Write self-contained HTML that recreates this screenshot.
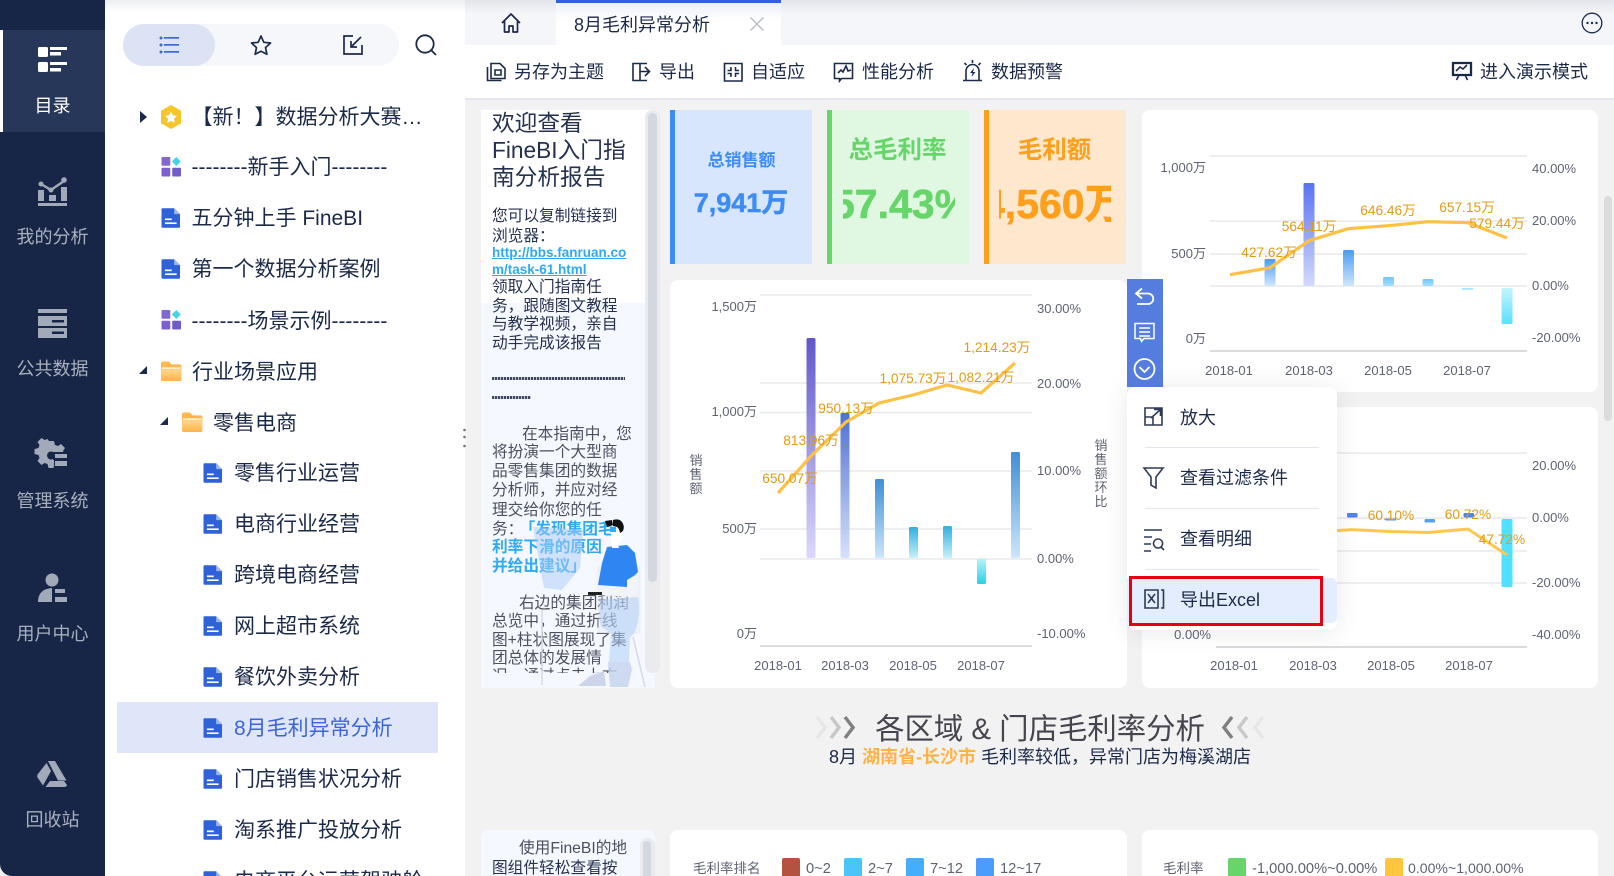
<!DOCTYPE html>
<html lang="zh"><head><meta charset="utf-8"><title>8月毛利异常分析</title>
<style>
html{margin:0;padding:0;background:#f2f2f2;width:1614px;height:876px;overflow:hidden}
body{margin:0;padding:0;background:#f2f2f2;position:relative;width:1614px;height:876px;overflow:hidden;font-family:"Liberation Sans","Noto Sans CJK SC",sans-serif;color:#1c2a4a}
.a{position:absolute;white-space:nowrap}
.t{position:absolute;white-space:nowrap;font-size:21px;height:30px;line-height:30px;color:#1c2a4a;margin-top:1.5px}
.s{position:absolute;left:0;width:105px;text-align:center;font-size:18px;height:26px;line-height:26px;color:#a9b0bd;margin-top:.5px}
.b{position:absolute;white-space:nowrap;font-size:18px;height:26px;line-height:26px;color:#1c2a4a;margin-top:1px}
.l{position:absolute;white-space:nowrap;left:492px;font-size:15.7px;height:20px;line-height:20px;color:#25314f;margin-top:2px}
.g{color:#4b505f}
.m{position:absolute;left:1180px;white-space:nowrap;font-size:18px;height:26px;line-height:26px;color:#1c2a4a;margin-top:1px}
svg{position:absolute;overflow:visible}
svg text{font-family:"Liberation Sans","Noto Sans CJK SC",sans-serif}
.ax{font-size:13px;fill:#5e6373}
.lb{font-size:13.7px;fill:#e09d12}
</style></head><body>

<svg width="0" height="0" style="left:0;top:0">
<defs>
<linearGradient id="fo" x1="0" y1="0" x2="0" y2="1"><stop offset="0" stop-color="#ffd88e"/><stop offset="1" stop-color="#fdb24a"/></linearGradient>
<symbol id="doc" viewBox="0 0 20 20"><path d="M1 0h12l6 6v13a1 1 0 0 1-1 1H1a1 1 0 0 1-1-1V1a1 1 0 0 1 1-1z" fill="#2f62d9"/><path d="M13 0l6 6h-6z" fill="#9db6ef"/><rect x="3.5" y="10.5" width="7" height="1.7" fill="#fff"/><rect x="3.5" y="14.5" width="12" height="1.7" fill="#fff"/></symbol>
<symbol id="grid" viewBox="0 0 20 20"><rect x="0" y="0" width="9" height="9" rx="1" fill="#8168cf"/><rect x="0" y="11" width="9" height="9" rx="1" fill="#7d5fd0"/><rect x="11" y="11" width="9" height="9" rx="1" fill="#6f5ccb"/><path d="M15.2 0l4.6 4.6-4.6 4.6-4.6-4.6z" fill="#48d2e6"/></symbol>
<symbol id="folder" viewBox="0 0 21 20"><path d="M0 2a2 2 0 0 1 2-2h6l3 3h8a2 2 0 0 1 2 2v13a2 2 0 0 1-2 2H2a2 2 0 0 1-2-2z" fill="#ffb84d"/><rect x="1" y="6" width="19" height="1.6" fill="#fff3dc"/><path d="M0 8h21v10a2 2 0 0 1-2 2H2a2 2 0 0 1-2-2z" fill="url(#fo)"/></symbol>
<linearGradient id="g1" x1="0" y1="0" x2="0" y2="1"><stop offset="0" stop-color="#6157c9"/><stop offset="1" stop-color="#dcd8fc"/></linearGradient>
<linearGradient id="g2" x1="0" y1="0" x2="0" y2="1"><stop offset="0" stop-color="#4e71cf"/><stop offset="1" stop-color="#d6e1fb"/></linearGradient>
<linearGradient id="g3" x1="0" y1="0" x2="0" y2="1"><stop offset="0" stop-color="#3f8fd6"/><stop offset="1" stop-color="#cde6fc"/></linearGradient>
<linearGradient id="g4" x1="0" y1="0" x2="0" y2="1"><stop offset="0" stop-color="#2fb0de"/><stop offset="1" stop-color="#c6f0fb"/></linearGradient>
<linearGradient id="g5" x1="0" y1="0" x2="0" y2="1"><stop offset="0" stop-color="#b4f4f9"/><stop offset="1" stop-color="#2ad0e4"/></linearGradient>
<linearGradient id="h1" x1="0" y1="0" x2="0" y2="1"><stop offset="0" stop-color="#5a72f2"/><stop offset="1" stop-color="#d2d9fb"/></linearGradient>
<linearGradient id="h2" x1="0" y1="0" x2="0" y2="1"><stop offset="0" stop-color="#4a9cf5"/><stop offset="1" stop-color="#cfe6fd"/></linearGradient>
<linearGradient id="h3" x1="0" y1="0" x2="0" y2="1"><stop offset="0" stop-color="#6fc8fb"/><stop offset="1" stop-color="#a5e0fd"/></linearGradient>
<linearGradient id="h4" x1="0" y1="0" x2="0" y2="1"><stop offset="0" stop-color="#c2f5fd"/><stop offset="1" stop-color="#5ce0fd"/></linearGradient>
</defs>
</svg>

<!-- content background chrome -->
<div class="a" style="left:465px;top:0;width:1149px;height:45px;background:#f5f6fa"></div>
<div class="a" style="left:465px;top:45px;width:1149px;height:53px;background:#fff;border-bottom:2px solid #e6e8ef;box-sizing:content-box"></div>
<div class="a" style="left:556px;top:0;width:225px;height:45px;background:linear-gradient(#e9edf8,#fff 45%)"></div>
<div class="a" style="left:556px;top:0;width:225px;height:3px;background:#2f62d9"></div>

<svg style="left:0;top:0" width="1614" height="876" viewBox="0 0 1614 876">
<!-- left text panel -->
<rect x="481" y="110" width="174" height="193" fill="#fff"/>
<rect x="481" y="303" width="174" height="385" fill="#f5f9ff"/>
<rect x="645" y="110" width="15" height="563" rx="7" fill="#e9ebef"/>
<rect x="648" y="113" width="9" height="469" rx="4.5" fill="#d3d7e0"/>
<!-- KPI cards -->
<rect x="670" y="110" width="142" height="154" fill="#d7e6fd"/><rect x="670" y="110" width="5" height="154" fill="#3d8cf5"/>
<rect x="827" y="110" width="142" height="154" fill="#e0f7e2"/><rect x="827" y="110" width="5" height="154" fill="#66d66a"/>
<rect x="984" y="110" width="142" height="154" fill="#fde8cd"/><rect x="984" y="110" width="5" height="154" fill="#ff9f1c"/>
<!-- card A -->
<rect x="1142" y="110" width="456" height="282" rx="8" fill="#fff"/>
<g stroke="#e8e9ec" stroke-width="1.4"><path d="M1210 156H1527M1210 221H1527M1210 254H1527M1210 286H1527"/></g>
<path d="M1210 351H1527" stroke="#cfd0d4" stroke-width="1.4"/>
<g>
<rect x="1264.5" y="259" width="11" height="27" rx="1.5" fill="url(#h2)"/>
<rect x="1303.5" y="183" width="11" height="103" rx="1.5" fill="url(#h1)"/>
<rect x="1343" y="250" width="11" height="36" rx="1.5" fill="url(#h2)"/>
<rect x="1383" y="277" width="11" height="9" rx="1.5" fill="url(#h3)"/>
<rect x="1422.5" y="279" width="11" height="7" rx="1.5" fill="url(#h3)"/>
<rect x="1462" y="288" width="11" height="1.8" fill="#a5e6fd"/>
<rect x="1501.5" y="288" width="11" height="36" rx="1.5" fill="url(#h4)"/>
</g>
<polyline points="1230,274.7 1270,267.7 1309,240.7 1348,228.7 1388,225.7 1428,221.7 1468,222.7 1507,238" fill="none" stroke="#ffc145" stroke-width="3.2"/>
<g class="ax" text-anchor="end"><text x="1206" y="172">1,000万</text><text x="1206" y="258">500万</text><text x="1206" y="343">0万</text></g>
<g class="ax"><text x="1532" y="173">40.00%</text><text x="1532" y="225">20.00%</text><text x="1532" y="290">0.00%</text><text x="1532" y="342">-20.00%</text></g>
<g class="ax" text-anchor="middle"><text x="1229" y="375">2018-01</text><text x="1309" y="375">2018-03</text><text x="1388" y="375">2018-05</text><text x="1467" y="375">2018-07</text></g>
<g class="lb" text-anchor="middle"><text x="1269" y="257">427.62万</text><text x="1309" y="231">564.11万</text><text x="1388" y="215">646.46万</text><text x="1467" y="212">657.15万</text><text x="1497" y="228">579.44万</text></g>
<!-- card B -->
<rect x="670" y="280" width="457" height="408" rx="8" fill="#fff"/>
<g stroke="#e8e9ec" stroke-width="1.4"><path d="M760 295H1032M760 383H1032M760 412.5H1032M760 471H1032M760 529H1032M760 559H1032"/></g>
<path d="M760 646H1032" stroke="#cfd0d4" stroke-width="1.4"/>
<g>
<rect x="806.5" y="338" width="9" height="220" rx="1.5" fill="url(#g1)"/>
<rect x="840.5" y="413" width="9" height="145" rx="1.5" fill="url(#g2)"/>
<rect x="875" y="479" width="9" height="79" rx="1.5" fill="url(#g3)"/>
<rect x="909" y="527" width="9" height="31" rx="1.5" fill="url(#g4)"/>
<rect x="943" y="526" width="9" height="32" rx="1.5" fill="url(#g4)"/>
<rect x="977" y="559" width="9" height="25" rx="1.5" fill="url(#g5)"/>
<rect x="1011" y="452" width="9" height="106" rx="1.5" fill="url(#g3)"/>
</g>
<polyline points="778,493 812,455 846,422 879,403 913,395 947,385 981,393 1015,363" fill="none" stroke="#ffc145" stroke-width="3.2"/>
<g class="ax" text-anchor="end"><text x="757" y="311">1,500万</text><text x="757" y="416">1,000万</text><text x="757" y="533">500万</text><text x="757" y="638">0万</text></g>
<g class="ax"><text x="1037" y="313">30.00%</text><text x="1037" y="388">20.00%</text><text x="1037" y="475">10.00%</text><text x="1037" y="563">0.00%</text><text x="1037" y="638">-10.00%</text></g>
<g class="ax" text-anchor="middle"><text x="778" y="670">2018-01</text><text x="845" y="670">2018-03</text><text x="913" y="670">2018-05</text><text x="981" y="670">2018-07</text></g>
<g class="ax" text-anchor="middle"><text x="696" y="465">销</text><text x="696" y="479">售</text><text x="696" y="493">额</text>
<text x="1101" y="450">销</text><text x="1101" y="464">售</text><text x="1101" y="478">额</text><text x="1101" y="492">环</text><text x="1101" y="506">比</text></g>
<g class="lb" text-anchor="middle"><text x="790" y="483">650.07万</text><text x="811" y="445">813.96万</text><text x="846" y="413">950.13万</text><text x="913" y="383">1,075.73万</text><text x="981" y="382">1,082.21万</text><text x="997" y="352">1,214.23万</text></g>
<!-- card C -->
<rect x="1142" y="407" width="456" height="281" rx="8" fill="#fff"/>
<g stroke="#e8e9ec" stroke-width="1.4"><path d="M1216 453H1527M1216 518H1527M1216 551H1527M1216 583H1527"/></g>
<path d="M1216 647H1527" stroke="#cfd0d4" stroke-width="1.4"/>
<rect x="1347" y="513" width="10.5" height="4.5" rx="1" fill="#4d84ee"/>
<rect x="1385.5" y="518.5" width="10.5" height="2" fill="#4d9bf0"/>
<rect x="1424.5" y="519" width="10.5" height="3.5" rx="1" fill="#54a2f3"/>
<rect x="1463.5" y="513" width="10.5" height="4.5" rx="1" fill="#4d84ee"/>
<rect x="1501.5" y="519" width="11" height="68" rx="1.5" fill="#52e0ff"/>
<polyline points="1330,531 1352,529.6 1390,531.5 1428,532.5 1468,529 1507,555" fill="none" stroke="#ffc750" stroke-width="3"/>
<g class="ax"><text x="1532" y="470">20.00%</text><text x="1532" y="522">0.00%</text><text x="1532" y="587">-20.00%</text><text x="1532" y="639">-40.00%</text></g>
<text class="ax" x="1211" y="639" text-anchor="end">0.00%</text>
<g class="ax" text-anchor="middle"><text x="1234" y="670">2018-01</text><text x="1313" y="670">2018-03</text><text x="1391" y="670">2018-05</text><text x="1469" y="670">2018-07</text></g>
<g class="lb" text-anchor="middle"><text x="1391" y="520">60.10%</text><text x="1468" y="519">60.72%</text><text x="1502" y="544">47.72%</text></g>
<!-- content scrollbar -->
<rect x="1604" y="196" width="8" height="225" rx="4" fill="#dcdcde"/>
<!-- heading chevrons -->
<g fill="none" stroke-width="3.5">
<polyline points="817,717 825,727.5 817,738" stroke="#e6e6e6"/><polyline points="831,717 839,727.5 831,738" stroke="#c8c8c8"/><polyline points="845,717 853,727.5 845,738" stroke="#808080"/>
<polyline points="1232,717 1224,727.5 1232,738" stroke="#808080"/><polyline points="1247,717 1239,727.5 1247,738" stroke="#c8c8c8"/><polyline points="1263,717 1255,727.5 1263,738" stroke="#e6e6e6"/>
</g>
<!-- bottom panels -->
<rect x="481" y="830" width="174" height="60" rx="8" fill="#f5f9ff"/>
<rect x="640" y="838" width="15" height="50" rx="7" fill="#e9ebef"/>
<rect x="643" y="841" width="8" height="40" rx="4" fill="#d3d7e0"/>
<rect x="670" y="830" width="457" height="60" rx="8" fill="#fff"/>
<rect x="1142" y="830" width="456" height="60" rx="8" fill="#fff"/>
<rect x="782" y="858" width="18" height="22" rx="2" fill="#b5523f"/><rect x="844" y="858" width="18" height="22" rx="2" fill="#49c5fa"/><rect x="906" y="858" width="18" height="22" rx="2" fill="#42aefc"/><rect x="976" y="858" width="18" height="22" rx="2" fill="#4a9dfa"/>
<rect x="1228" y="858" width="18" height="22" rx="2" fill="#66d66a"/><rect x="1385" y="858" width="18" height="22" rx="2" fill="#ffc53d"/>
<g fill="#5e6373"><g style="font-size:13.5px"><text x="693" y="873">毛利率排名</text><text x="1163" y="873">毛利率</text></g>
<g style="font-size:14.7px"><text x="806" y="873">0~2</text><text x="868" y="873">2~7</text><text x="930" y="873">7~12</text><text x="1000" y="873">12~17</text>
<text x="1252" y="873">-1,000.00%~0.00%</text><text x="1408" y="873" style="font-size:14.1px">0.00%~1,000.00%</text></g></g>
</svg>

<!-- Left panel text -->
<div class="a" style="left:492px;top:110px;font-size:22.7px;line-height:27px;color:#25314f">欢迎查看<br>FineBI入门指<br>南分析报告</div>
<div class="l" style="top:205px">您可以复制链接到</div>
<div class="l" style="top:225px">浏览器：</div>
<div class="a" style="left:492px;top:245px;font-size:13.5px;line-height:16.5px;font-weight:700;color:#2eaaf5;text-decoration:underline">http://bbs.fanruan.co<br>m/task-61.html</div>
<div class="l" style="top:276px">领取入门指南任</div>
<div class="l" style="top:295px">务，跟随图文教程</div>
<div class="l" style="top:313px">与教学视频，亲自</div>
<div class="l" style="top:332px">动手完成该报告</div>
<div class="a" style="left:492px;top:377px;width:133px;height:3px;background:repeating-linear-gradient(90deg,#3c4560 0 2px,#c3c8d4 2px 3px)"></div>
<div class="a" style="left:492px;top:396px;width:39px;height:3px;background:repeating-linear-gradient(90deg,#3c4560 0 2px,#c3c8d4 2px 3px)"></div>
<div class="l g" style="top:423px;left:522px">在本指南中，您</div>
<div class="l g" style="top:441px">将扮演一个大型商</div>
<div class="l g" style="top:460px">品零售集团的数据</div>
<div class="l g" style="top:479px">分析师，并应对经</div>
<div class="l g" style="top:499px">理交给你您的任</div>
<div class="l g" style="top:518px">务：<b style="color:#2eaaf5;margin-left:4px">「发现集团毛</b></div>
<div class="l" style="top:536px;font-weight:700;color:#2eaaf5">利率下滑的原因</div>
<div class="l" style="top:555px;font-weight:700;color:#2eaaf5">并给出建议」</div>
<div class="l g" style="top:592px;left:519px">右边的集团利润</div>
<div class="l g" style="top:610px">总览中，通过折线</div>
<div class="l g" style="top:629px">图+柱状图展现了集</div>
<div class="l g" style="top:647px">团总体的发展情</div>
<div class="a" style="left:492px;top:667px;height:6px;overflow:hidden;font-size:15.7px;line-height:20px;color:#4b505f">况，通过点击上方</div>

<!-- illustration -->
<svg style="left:481px;top:500px" width="180" height="190" viewBox="481 500 180 190">
<path d="M533 527l50 3-3 38-18 22-18-2z" fill="#a9c9f8" opacity=".5"/>
<path d="M598 567h42v66h-42z" fill="#dfe5ee" opacity=".3" stroke="#cfd5de"/>
<path d="M542 610v75M633 637l12 50" stroke="#d5d9e2" stroke-width="1.500" fill="none"/>
<path d="M600 600l38-3q3 18-3 35l-5 6-1 24h-20l2-28-10-8q-3-12-1-26z" fill="#a9ccf8" opacity=".5"/>
<path d="M608 662h22l2 8-4 17h-18z" fill="#c4d1ef" opacity=".8"/>
<path d="M578 686l12-10 14-5 2 15z" fill="#ccd5ea"/>
<path d="M607 547l20-2 8 8 3 19-8 8-3 7-29-2 4-22z" fill="#2f86f2"/>
<path d="M627 580l10-6 1 16-6 7-30-2 1-6 24 2z" fill="#f3f4f7"/>
<rect x="588" y="592" width="14" height="3" fill="#222"/>
<path d="M611 530l8-2 4 6-1 6-4 4 1 4-7 0-1-8z" fill="#fff"/>
<path d="M605 521l7-1 1 5-6 2zM613 520q6-2 9 2t1 9l-3 2q-1-5-3-6l-4-1z" fill="#111"/>
<path d="M610 527h6v5h-6z" fill="#2eaaf5"/>
</svg>

<!-- KPIs -->
<div class="a" style="left:673px;top:148px;width:137px;text-align:center;font-size:17px;line-height:26px;font-weight:700;color:#3d8cf5">总销售额</div>
<div class="a" style="left:672.5px;top:187px;width:137px;text-align:center;font-size:27px;line-height:32px;font-weight:700;color:#3d8cf5;-webkit-text-stroke:.5px #3d8cf5">7,941万</div>
<div class="a" style="left:829px;top:135px;width:137px;text-align:center;font-size:24.5px;line-height:32px;font-weight:700;color:#66d66a">总毛利率</div>
<div class="a" style="left:843px;top:179px;width:112px;height:50px;overflow:hidden"><span class="a" style="left:-11px;top:0;font-size:41px;line-height:50px;font-weight:700;color:#66d66a;-webkit-text-stroke:.6px #66d66a">57.43%</span></div>
<div class="a" style="left:986px;top:135px;width:137px;text-align:center;font-size:24.5px;line-height:32px;font-weight:700;color:#ff9f1c">毛利额</div>
<div class="a" style="left:999px;top:179px;width:112px;height:50px;overflow:hidden"><span class="a" style="left:-17px;top:0;font-size:41px;line-height:50px;font-weight:700;color:#ff9f1c;-webkit-text-stroke:.6px #ff9f1c">4,560万</span></div>

<!-- heading -->
<div class="a" style="left:765px;top:708px;width:550px;text-align:center;font-size:29.4px;line-height:44px;color:#45454f">各区域 &amp; 门店毛利率分析</div>
<div class="a" style="left:765px;top:744px;width:550px;text-align:center;font-size:18px;line-height:26px;color:#1c2a4a">8月 <b style="color:#ffb347">湖南省-长沙市</b> 毛利率较低，异常门店为梅溪湖店</div>
<div class="a" style="left:519px;top:839px;font-size:15.7px;line-height:20px;color:#4b505f">使用FineBI的地</div>
<div class="a" style="left:492px;top:859px;font-size:15.7px;line-height:20px;color:#25314f">图组件轻松查看按</div>

<!-- Tree panel -->
<div class="a" style="left:105px;top:0;width:360px;height:876px;background:#fff"></div>
<div class="a" style="left:123px;top:24px;width:276px;height:42px;border-radius:21px;background:#f5f7fa"></div>
<div class="a" style="left:123px;top:24px;width:92px;height:42px;border-radius:21px;background:#dbe3f5"></div>
<svg style="left:159px;top:35px" width="22" height="20" viewBox="0 0 22 20"><g fill="#3a6ae0"><circle cx="2" cy="3" r="1.5"/><circle cx="2" cy="10" r="1.5"/><circle cx="2" cy="17" r="1.5"/><rect x="5" y="2" width="15" height="1.7"/><rect x="5" y="9" width="15" height="1.7"/><rect x="5" y="16" width="15" height="1.7"/></g></svg>
<svg style="left:250px;top:34px" width="22" height="22" viewBox="0 0 22 22"><path d="M11 2l2.800 6.300 6.700.7-5 4.600 1.400 6.700L11 17.200 5.100 20.300l1.400-6.700-5-4.600 6.700-.7z" fill="none" stroke="#1c2a4a" stroke-width="1.700" stroke-linejoin="round"/></svg>
<svg style="left:343px;top:35px" width="20" height="20" viewBox="0 0 20 20"><path d="M10 1H1v18h18v-9" fill="none" stroke="#1c2a4a" stroke-width="1.700"/><path d="M18 2L9 11M8 6v6h6" fill="none" stroke="#1c2a4a" stroke-width="1.700"/></svg>
<svg style="left:415px;top:34px" width="22" height="22" viewBox="0 0 22 22"><circle cx="10" cy="10" r="8.700" fill="none" stroke="#1c2a4a" stroke-width="1.800"/><path d="M16.500 16.500L21 21" stroke="#1c2a4a" stroke-width="1.800"/></svg>

<div class="a" style="left:117px;top:702px;width:321px;height:51px;background:#e0e6f9"></div>

<svg style="left:0;top:0" width="470" height="876" viewBox="0 0 470 876">
<path d="M140 111l7 6-7 6z" fill="#1c2a4a"/>
<path d="M147 366v8h-8z" fill="#1c2a4a"/>
<path d="M168 417v8h-8z" fill="#1c2a4a"/>
<path d="M171 105.500l9.500 5.500v12l-9.500 5.500-9.500-5.500v-12z" fill="#f5c52a" stroke="#f5c52a" stroke-width="1" stroke-linejoin="round"/>
<path d="M171 111.500l1.900 3.800 4.100.6-3 2.900.7 4.100-3.700-2-3.700 2 .7-4.100-3-2.900 4.100-.6z" fill="#fff"/>
<use href="#grid" x="161.500" y="157" width="19.500" height="19.500"/>
<use href="#doc" x="161.500" y="208" width="19.500" height="20"/>
<use href="#doc" x="161.500" y="259" width="19.500" height="20"/>
<use href="#grid" x="161.500" y="310" width="19.500" height="19.500"/>
<use href="#folder" x="161" y="361.500" width="20.500" height="19.500"/>
<use href="#folder" x="182" y="412.500" width="20.500" height="19.500"/>
<use href="#doc" x="203.500" y="463" width="19.500" height="20"/>
<use href="#doc" x="203.500" y="514" width="19.500" height="20"/>
<use href="#doc" x="203.500" y="565" width="19.500" height="20"/>
<use href="#doc" x="203.500" y="616" width="19.500" height="20"/>
<use href="#doc" x="203.500" y="667" width="19.500" height="20"/>
<use href="#doc" x="203.500" y="718" width="19.500" height="20"/>
<use href="#doc" x="203.500" y="769" width="19.500" height="20"/>
<use href="#doc" x="203.500" y="820" width="19.500" height="20"/>
<use href="#doc" x="203.500" y="871" width="19.500" height="20"/>
<g fill="#6d7483"><circle cx="464.500" cy="430" r="1.300"/><circle cx="464.500" cy="437" r="1.300"/><circle cx="464.500" cy="446" r="1.300"/></g>
</svg>

<div class="t" style="left:191.500px;top:101px">【新！】数据分析大赛…</div>
<div class="t" style="left:191.500px;top:151.500px">--------新手入门--------</div>
<div class="t" style="left:191.500px;top:202px">五分钟上手 FineBI</div>
<div class="t" style="left:191.500px;top:253.500px">第一个数据分析案例</div>
<div class="t" style="left:191.500px;top:305px">--------场景示例--------</div>
<div class="t" style="left:192px;top:356px">行业场景应用</div>
<div class="t" style="left:213px;top:407px">零售电商</div>
<div class="t" style="left:234px;top:457.500px">零售行业运营</div>
<div class="t" style="left:234px;top:508px">电商行业经营</div>
<div class="t" style="left:234px;top:559px">跨境电商经营</div>
<div class="t" style="left:234px;top:610px">网上超市系统</div>
<div class="t" style="left:234px;top:661px">餐饮外卖分析</div>
<div class="t" style="left:234px;top:712px;color:#3b66d8">8月毛利异常分析</div>
<div class="t" style="left:234px;top:763px">门店销售状况分析</div>
<div class="t" style="left:234px;top:814px">淘系推广投放分析</div>
<div class="t" style="left:234px;top:865px">电商平台运营驾驶舱</div>
<div class="a" style="left:105px;top:0;width:360px;height:12px;background:linear-gradient(#eceef1,rgba(255,255,255,0))"></div>

<!-- Sidebar -->
<div class="a" style="left:0;top:0;width:105px;height:876px;background:#172647;border-bottom-left-radius:12px"></div>
<div class="a" style="left:0;top:30px;width:105px;height:102px;background:#27375a"></div>
<div class="a" style="left:0;top:30px;width:3px;height:102px;background:#fff"></div>
<svg style="left:0;top:0" width="105" height="876" viewBox="0 0 105 876">
<g fill="#fff"><rect x="38" y="47" width="10" height="10" rx="1.500"/><rect x="50" y="47" width="17" height="3"/><rect x="50" y="52" width="11" height="3.500"/><rect x="38" y="62" width="10" height="10" rx="1.500"/><rect x="50" y="62" width="17" height="3"/><rect x="50" y="68" width="11" height="3.500"/></g>
<g fill="#a2aab9">
<rect x="38" y="190" width="6" height="11"/><rect x="49" y="195" width="7" height="6"/><rect x="61" y="187" width="6" height="14"/><rect x="38" y="203" width="29" height="3"/>
<path d="M41 184l10 6 13-9" fill="none" stroke="#a2aab9" stroke-width="2.400"/><circle cx="41" cy="184" r="2.500"/><circle cx="51" cy="190" r="2.500"/><circle cx="64" cy="180" r="2.800"/>
<rect x="38" y="309" width="29" height="4"/>
<path d="M38 316h29v10H38zM52 320v2.500h12V320zM38 328h29v10H38zM52 331.500V334h12v-2.500z" fill-rule="evenodd"/>
<path d="M49 441h5l1 4 3 1 3-2 4 4-2 3 .5 1H53a4 4 0 1 0 0 7v1h1v6l-.500 2h-5l-1-4-3-1-3 2-4-4 2-3-1-3-4-1v-5l4-1 1-3-2-3 4-4 3 2 3-1z"/>
<rect x="55" y="454" width="12" height="4"/><rect x="55" y="461" width="12" height="5"/>
<circle cx="52" cy="580" r="6.500"/><path d="M38 602q0-13 14-14v14z"/><rect x="55" y="589" width="10" height="4"/><rect x="55" y="597" width="12" height="5"/>
<path d="M48 761h7l11.500 19.500H58z"/><path d="M46.500 763l4.500 8-8 14.500-5.500-8q-.6-1.500 0-3z"/><path d="M50 781h14l3 4q-.5 2-3 2H45.500z"/>
</g>
</svg>
<div class="s" style="top:92px;color:#fff">目录</div>
<div class="s" style="top:223px">我的分析</div>
<div class="s" style="top:355px">公共数据</div>
<div class="s" style="top:487px">管理系统</div>
<div class="s" style="top:620px">用户中心</div>
<div class="s" style="top:806px">回收站</div>

<!-- Tabs + toolbar -->
<div class="a" style="left:465px;top:0;width:91px;height:14px;background:linear-gradient(#e3e5ea,rgba(245,246,250,0))"></div>
<div class="a" style="left:781px;top:0;width:833px;height:14px;background:linear-gradient(#e3e5ea,rgba(245,246,250,0))"></div>
<svg style="left:501px;top:13px" width="20" height="20" viewBox="0 0 20 20"><path d="M1 10l9-9 9 9M3.500 8v11h4.500v-6h4v6h4.500V8" fill="none" stroke="#1c2a4a" stroke-width="1.700" stroke-linejoin="round"/></svg>
<div class="b" style="left:574px;top:11px">8月毛利异常分析</div>
<svg style="left:750px;top:17px" width="14" height="14" viewBox="0 0 14 14"><path d="M.500 .500l13 13M13.500 .500l-13 13" stroke="#b9bdc6" stroke-width="1.400"/></svg>
<svg style="left:1581px;top:12px" width="22" height="22" viewBox="0 0 22 22"><circle cx="11" cy="11" r="9.800" fill="none" stroke="#1c2a4a" stroke-width="1.300"/><g fill="#1c2a4a"><circle cx="6.500" cy="11" r="1.200"/><circle cx="11" cy="11" r="1.200"/><circle cx="15.500" cy="11" r="1.200"/></g></svg>

<svg style="left:0;top:0" width="1614" height="98" viewBox="0 0 1614 98"><g fill="none" stroke="#1c2a4a" stroke-width="1.600">
<path d="M491 63.500h9l5 5v10h-14zM495 70h6v5h-6zM487.500 67v13.500h14"/>
<path d="M647 63.500h-14v17h14M640 63.500v17M645 67l4.500 4.500-4.500 4.500M640 71.500h9"/>
<path d="M724.500 63.500h17.500v17.500h-17.500zM731 67v3.500h-3.500M735.500 67v3.500h3.500M731 77v-3.500h-3.500M735.500 77v-3.500h3.500"/>
<path d="M834.500 63.500h18v15h-11l-2 2.500v-2.500h-5zM838 73l3-3 2 2 3-6 2 5 3-1"/>
<path d="M963 80.500h19M966 80v-9a6.500 6.500 0 0 1 13 0v9M972.500 60v3M964.500 63l2 2M980.500 63l-2 2"/>
<path d="M1453 63h18v12h-18z" stroke-width="2.300"/><path d="M1456 71l4-4 3 2 4-4M1459 75l-2.500 5M1465 75l2.500 5" stroke-width="1.600"/>
</g><path d="M974 68l-4 5h2.500l-1 4 4-5h-2.500z" fill="#1c2a4a"/></svg>
<div class="b" style="left:514px;top:58px">另存为主题</div>
<div class="b" style="left:659px;top:58px">导出</div>
<div class="b" style="left:751px;top:58px">自适应</div>
<div class="b" style="left:862px;top:58px">性能分析</div>
<div class="b" style="left:991px;top:58px">数据预警</div>
<div class="b" style="left:1480px;top:58px">进入演示模式</div>

<!-- Floating toolbar + popup -->
<div class="a" style="left:1127px;top:279px;width:36px;height:108px;background:#557de0"></div>
<svg style="left:1127px;top:279px" width="36" height="108" viewBox="0 0 36 108"><g fill="none" stroke="#fff" stroke-width="1.800">
<path d="M15 9.500l-6 5 6 5M9 14.500h12a5 5 0 0 1 0 10.500H10"/>
<path d="M8 44.500h19v15H17l-2.500 3-1-3H8zM12 49h11M12 53h11M12 57h11" stroke-width="1.500"/>
<circle cx="17.500" cy="90" r="10"/><path d="M12.500 88l5 5 5-5"/>
</g></svg>
<div class="a" style="left:1127px;top:387px;width:210px;height:243px;background:#fff;border-radius:8px;box-shadow:0 2px 24px rgba(60,70,100,.12)"></div>
<div class="a" style="left:1145px;top:447px;width:174px;height:1px;background:#e5e7ee"></div>
<div class="a" style="left:1145px;top:508px;width:174px;height:1px;background:#e5e7ee"></div>
<div class="a" style="left:1145px;top:569px;width:174px;height:1px;background:#e5e7ee"></div>
<div class="a" style="left:1127px;top:578px;width:210px;height:45px;background:#e3edfd;border-radius:0 6px 6px 0"></div>
<div class="a" style="left:1129px;top:576px;width:194px;height:50px;box-sizing:border-box;border:3.300px solid #e60012"></div>
<svg style="left:1140px;top:400px" width="30" height="215" viewBox="0 0 30 215"><g fill="none" stroke="#2f3a55" stroke-width="1.600">
<path d="M5 8h17v17H5zM5 17h8v8M11 18l9-8M14 9.500h6.500V16"/>
<path d="M4 68h19l-7 9v11l-5-3v-8z"/>
<path d="M4 130h18M4 137h8M4 144h7M4 151h7M18 139a4.500 4.500 0 1 0 .1 0M21 147l3 3"/>
<path d="M5 190h13v18H5zM8 194l7 9M15 194l-7 9M21 190h2.500v18H21"/>
</g></svg>
<div class="m" style="top:404px">放大</div>
<div class="m" style="top:464px">查看过滤条件</div>
<div class="m" style="top:525px">查看明细</div>
<div class="m" style="top:586px">导出Excel</div>
</body></html>
